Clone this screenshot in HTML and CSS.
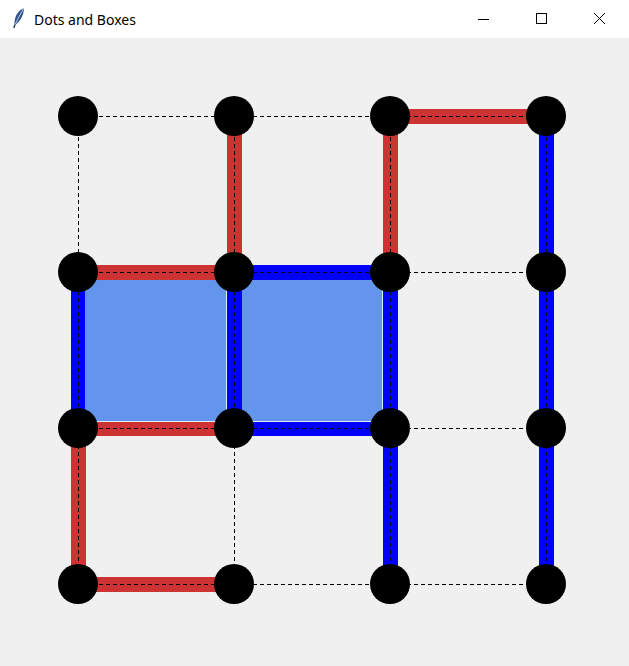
FILE: index.html
```html
<!DOCTYPE html>
<html lang="en">
<head>
    <meta charset="UTF-8">
    <meta name="viewport" content="width=device-width, initial-scale=1.0">
    <title>Dots and Boxes</title>
    <link rel="stylesheet" href="styles.css">
</head>
<body>
    <div class="window">
        <!-- Title bar -->
        <div class="titlebar">
            <svg class="app-icon" width="14" height="22" viewBox="0 0 14 22">
                <path d="M12 1 C7 3 3 8 2.5 15 L2.5 19 L4.5 17 C9 13 12 7 12 1 Z" fill="#34558c"/>
                <path d="M12 1 C9.5 5 6.5 10 3.5 17" stroke="#b9cbe6" stroke-width="1" fill="none"/>
                <path d="M2.8 18 L1.8 21" stroke="#1f2d45" stroke-width="1.3"/>
            </svg>
            <span class="title">Dots and Boxes</span>
            <div class="controls">
                <svg class="ctl" width="58" height="38" viewBox="0 0 58 38">
                    <line x1="23" y1="19.5" x2="34" y2="19.5" stroke="#000" stroke-width="1"/>
                </svg>
                <svg class="ctl" width="58" height="38" viewBox="0 0 58 38">
                    <rect x="23.5" y="13.5" width="10" height="10" fill="none" stroke="#000" stroke-width="1"/>
                </svg>
                <svg class="ctl" width="58" height="38" viewBox="0 0 58 38">
                    <path d="M23 13 L34 24 M34 13 L23 24" stroke="#000" stroke-width="1"/>
                </svg>
            </div>
        </div>

        <!-- Game board -->
        <div class="board">
            <svg width="629" height="628" viewBox="0 0 629 628">
                <!-- claimed edges -->
                <g class="edges">
                    <line class="red" x1="390" y1="78.5" x2="546" y2="78.5"/>
                    <line class="red" x1="78" y1="234.5" x2="234" y2="234.5"/>
                    <line class="blue" x1="234" y1="234.5" x2="390" y2="234.5"/>
                    <line class="red" x1="78" y1="390.5" x2="234" y2="390.5"/>
                    <line class="blue" x1="234" y1="390.5" x2="390" y2="390.5"/>
                    <line class="red" x1="78" y1="546.5" x2="234" y2="546.5"/>

                    <line class="blue" x1="78.5" y1="234" x2="78.5" y2="390"/>
                    <line class="red" x1="78.5" y1="390" x2="78.5" y2="546"/>
                    <line class="red" x1="234.5" y1="78" x2="234.5" y2="234"/>
                    <line class="blue" x1="234.5" y1="234" x2="234.5" y2="390"/>
                    <line class="red" x1="390.5" y1="78" x2="390.5" y2="234"/>
                    <line class="blue" x1="390.5" y1="234" x2="390.5" y2="390"/>
                    <line class="blue" x1="390.5" y1="390" x2="390.5" y2="546"/>
                    <line class="blue" x1="546.5" y1="78" x2="546.5" y2="234"/>
                    <line class="blue" x1="546.5" y1="234" x2="546.5" y2="390"/>
                    <line class="blue" x1="546.5" y1="390" x2="546.5" y2="546"/>
                </g>

                <!-- completed boxes -->
                <g class="boxes">
                    <rect class="box" x="85" y="242" width="142" height="141"/>
                    <path class="box-edge" d="M226.5 242 V383.5 H85"/>
                    <rect class="box" x="242" y="242" width="141" height="141"/>
                    <path class="box-edge" d="M382.5 242 V383.5 H242"/>
                </g>

                <!-- grid guides -->
                <g class="guides">
                    <line x1="78" y1="78.5" x2="546" y2="78.5"/>
                    <line x1="78" y1="234.5" x2="546" y2="234.5"/>
                    <line x1="78" y1="390.5" x2="546" y2="390.5"/>
                    <line x1="78" y1="546.5" x2="546" y2="546.5"/>
                    <line x1="78.5" y1="78" x2="78.5" y2="546"/>
                    <line x1="234.5" y1="78" x2="234.5" y2="546"/>
                    <line x1="390.5" y1="78" x2="390.5" y2="546"/>
                    <line x1="546.5" y1="78" x2="546.5" y2="546"/>
                </g>

                <!-- dots -->
                <g class="dots">
                    <circle cx="78" cy="78" r="20"/>
                    <circle cx="234" cy="78" r="20"/>
                    <circle cx="390" cy="78" r="20"/>
                    <circle cx="546" cy="78" r="20"/>
                    <circle cx="78" cy="234" r="20"/>
                    <circle cx="234" cy="234" r="20"/>
                    <circle cx="390" cy="234" r="20"/>
                    <circle cx="546" cy="234" r="20"/>
                    <circle cx="78" cy="390" r="20"/>
                    <circle cx="234" cy="390" r="20"/>
                    <circle cx="390" cy="390" r="20"/>
                    <circle cx="546" cy="390" r="20"/>
                    <circle cx="78" cy="546" r="20"/>
                    <circle cx="234" cy="546" r="20"/>
                    <circle cx="390" cy="546" r="20"/>
                    <circle cx="546" cy="546" r="20"/>
                </g>
            </svg>
        </div>
    </div>
</body>
</html>
```

FILE: styles.css
```css
/* General Styles */
body {
    margin: 0;
    padding: 0;
    font-family: "Noto Sans", "Open Sans", sans-serif;
    background-color: #f0f0f0;
}

.window {
    width: 629px;
    height: 666px;
    overflow: hidden;
}

/* Title Bar */
.titlebar {
    height: 38px;
    background-color: #fff;
    display: flex;
    align-items: center;
}

.app-icon {
    margin-left: 12px;
    margin-top: -2px;
}

.title {
    margin-left: 8px;
    font-size: 14px;
    color: #000;
}

.controls {
    margin-left: auto;
    display: flex;
}

.ctl {
    display: block;
}

/* Board */
.board {
    height: 628px;
    background-color: #f0f0f0;
}

.board svg {
    display: block;
}

.edges line {
    stroke-width: 15;
    stroke-linecap: butt;
}

.edges .red {
    stroke: #cd3333;
}

.edges .blue {
    stroke: #0000ff;
}

.box {
    fill: #6495ed;
}

.box-edge {
    fill: none;
    stroke: #e3eaf8;
    stroke-width: 1;
}

.guides line {
    stroke: #000;
    stroke-width: 1;
    stroke-dasharray: 4 3;
    shape-rendering: crispEdges;
}

.dots circle {
    fill: #000;
}
```
